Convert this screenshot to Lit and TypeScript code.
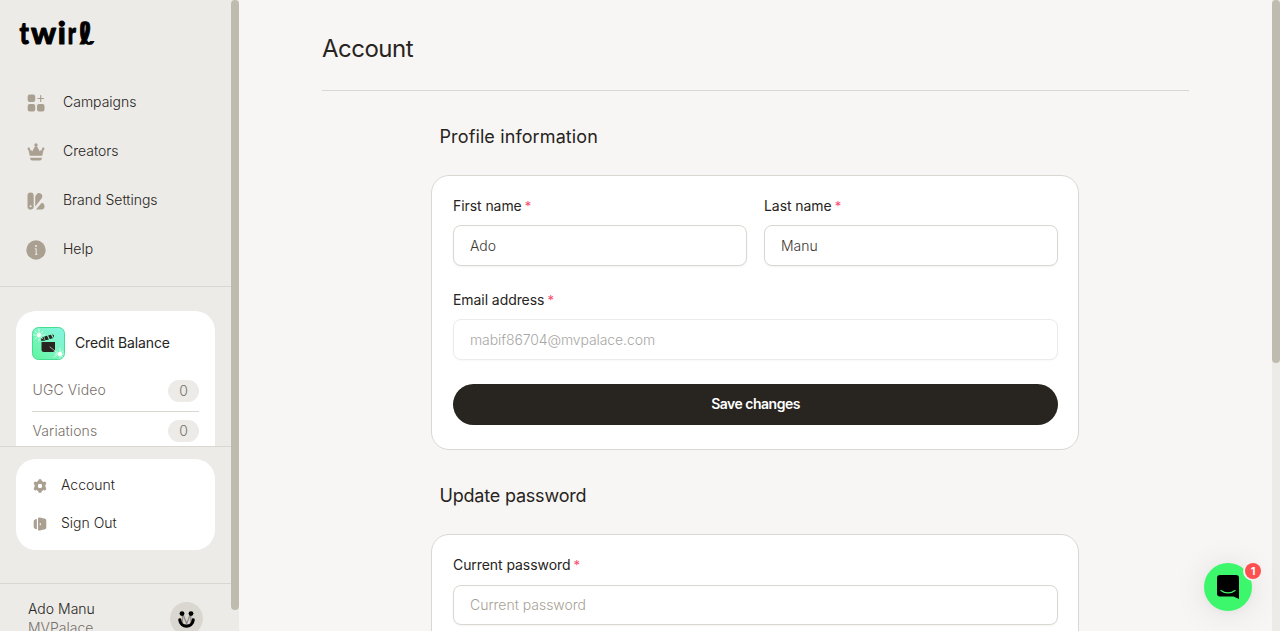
import { LitElement, html, css, svg } from "lit";
import { customElement, property } from "lit/decorators.js";

const icons: Record<string, unknown> = {
  campaigns: svg`<rect x="1.700" y="1.500" width="7.500" height="7.500" rx="2"/><rect x="1.700" y="10.900" width="7.500" height="7.500" rx="2"/><rect x="11" y="10.900" width="7.500" height="7.500" rx="2"/><path d="M14.700 2.600v5.800M11.800 5.500h5.800" fill="none" stroke="currentColor" stroke-width="1.200" stroke-linecap="round"/>`,
  creators: svg`<path d="M4 13.500 2.600 7l3.900 2.500 2.700-5h1.600l2.700 5L17.400 7 16 13.500z" stroke="currentColor" stroke-linejoin="round" stroke-width=".6"/><circle cx="10" cy="2.900" r="1.700"/><circle cx="2.800" cy="6.700" r="1.200"/><circle cx="17.200" cy="6.700" r="1.200"/><path d="M4 15.800h12c0 1.600-1 2.700-2.200 2.700H6.200c-1.200 0-2.200-1.100-2.200-2.700z"/>`,
  brand: svg`<path fill-rule="evenodd" d="M1.500 4.500a3 3 0 0 1 6.200 0V15.500a3.100 3.100 0 0 1-6.200 0zM4.600 14.300a1 1 0 1 0 0 2 1 1 0 0 0 0-2z"/><path d="M9.200 5.600l1-1.700c1.500-2.500 3.400-1.900 4.400-1.300 1.700 1 2.300 2.700 1.300 4.400l-6.700 8.500z"/><path d="M10 18.500l5.300-6.300c2-1.100 3.200 1.400 3.200 3 0 2-1.200 3.300-3 3.300z"/>`,
  help: svg`<circle cx="10" cy="10" r="9.700"/><circle cx="10" cy="6.100" r="1" fill="#ecebe7"/><path d="M8.900 8.800H10.200v5.400M9 14.400h2.300" stroke="#ecebe7" stroke-width="1" fill="none"/>`,
  gear: svg`<circle cx="10" cy="10" r="5.500" fill="none" stroke="currentColor" stroke-width="4.600"/><path d="M10 2.600v1.600M10 15.800v1.600M3.600 6.300l1.400.8M15 12.900l1.400.8M3.600 13.700l1.400-.8M15 7.100l1.400-.8" stroke="currentColor" stroke-width="5" stroke-linecap="round"/>`,
  door: svg`<path d="M5.500 3v14.400C2.700 17.400 1 16.200 1 13.500V7C1 4.200 2.700 3 5.500 3z"/><path fill-rule="evenodd" d="M7.200 2.200C7.200 1 8.200.4 9.500.6l6.500 1.500c2.200.5 3 1.600 3 3.400v9.200c0 1.800-.8 2.900-3 3.300l-6.500 1.400c-1.300.3-2.300-.2-2.300-1.400zM9.700 8.400v3.400h1.300V8.400z"/>`,
};

@customElement("ui-icon")
class UiIcon extends LitElement {
  @property() name = "";
  static styles = css`
    :host { display: block; width: 20px; height: 20px; color: #aaa091; flex: none; }
    svg { display: block; width: 100%; height: 100%; fill: currentColor; }
  `;
  render() {
    return html`<svg viewBox="0 0 20 20">${icons[this.name]}</svg>`;
  }
}

@customElement("text-field")
class TextField extends LitElement {
  @property() label = "";
  @property() value = "";
  @property() placeholder = "";
  @property({ type: Boolean, reflect: true }) disabled = false;
  static styles = css`
    :host { display: block; min-width: 0; }
    .label { display: block; height: 20.2px; line-height: 20px; font-size: 14px; letter-spacing: -0.07px; color: #272421; margin-bottom: 9px; white-space: nowrap; }
    .star { color: #fb4a6b; font-size: 13px; margin-left: -0.8px; }
    .input { display: block; box-sizing: border-box; width: 100%; height: 40.6px; border: 1px solid #d9d7d0; border-radius: 8px; background: #fff; padding: 0 16px; font: 300 14px Inter, sans-serif; letter-spacing: -0.02px; color: #3c3833; box-shadow: 0 1px 2px rgba(0, 0, 0, 0.05); outline: none; }
    .input::placeholder { color: #a8a295; opacity: 1; }
    :host([disabled]) .input { letter-spacing: -0.1px; border-color: #ecebea; color: #a9a7a5; -webkit-text-fill-color: #a9a7a5; box-shadow: 0 1px 2px rgba(0, 0, 0, 0.03); }
  `;
  render() {
    return html`<label class="label">${this.label} <span class="star">*</span></label>
      <input class="input" .value=${this.value} placeholder=${this.placeholder} ?disabled=${this.disabled} />`;
  }
}

@customElement("app-root")
class AppRoot extends LitElement {
  static styles = css`
    :host { display: block; height: 631px; font-family: Inter, "Liberation Sans", sans-serif; font-size: 14px; color: #272421; }
    .shell { position: relative; display: flex; height: 631px; overflow: hidden; background: #f7f6f4; }
    .side { width: 239px; flex: none; display: flex; background: #ecebe7; }
    .col { width: 231px; flex: none; display: flex; flex-direction: column; font-weight: 300; }
    .col > * { flex: none; }
    .thumb { width: 8px; height: 610px; border-radius: 4px; background: #c0bbaf; }
    .brand { height: 78px; box-sizing: border-box; padding: 17px 0 0 19px; }
    .logo { display: block; width: 80px; height: 34px; fill: #000; overflow: visible; }
    .nav { height: 208px; border-bottom: 1px solid #d9d7d0; }
    .link { display: flex; align-items: center; height: 49px; padding-left: 26px; gap: 17px; }
    .link ui-icon { margin-top: 1px; }
    .link span, .mini span { margin-top: -1px; }
    .link span { padding-bottom: 1px; }
    .credits { height: 135px; padding: 24px 16px 0; overflow: hidden; border-bottom: 1px solid #d9d7d0; }
    .box { background: #fff; border-radius: 20px; }
    .credit { height: 200px; padding: 16px; box-sizing: border-box; }
    .credit-head { display: flex; align-items: center; gap: 10px; height: 33px; margin-bottom: 10px; font-weight: 400; letter-spacing: -0.13px; }
    .credit-head span { padding-bottom: 2px; }
    .badge { display: block; width: 33px; height: 33px; }
    .row { display: flex; align-items: center; justify-content: space-between; height: 42px; box-sizing: border-box; color: #78716a; border-bottom: 1px solid #d9d7d0; letter-spacing: 0.1px; padding-left: 0.5px; }
    .row > span:first-child { padding-bottom: 2px; }
    .row + .row { height: 38px; border: 0; }
    .pill { width: 31px; height: 22px; line-height: 21px; border-radius: 11px; background: #ecebe7; text-align: center; }
    .account { margin: 12px 16px 0; height: 91px; box-sizing: border-box; padding: 7px 17px; }
    .mini { display: flex; align-items: center; height: 38px; gap: 14px; }
    .mini span { padding-bottom: 1px; }
    .mini ui-icon { width: 14px; height: 14px; margin-top: 1px; }
    .user { display: flex; justify-content: space-between; margin-top: 33px; border-top: 1px solid #d9d7d0; padding: 15px 28px 0; height: 60px; }
    .names { line-height: 19px; }
    .muted { color: #78716a; }
    .avatar { display: block; width: 33px; height: 33px; margin-top: 3px; }
    .main { flex: 1; min-width: 0; padding: 0 83px; }
    .title { margin: 0; height: 91px; box-sizing: border-box; padding-top: 33px; line-height: 32px; font-size: 24px; font-weight: 400; letter-spacing: -0.5px; border-bottom: 1px solid #d9d7d0; }
    .section { width: 648px; margin: 0 auto 0 109px; }
    .section.first { padding-top: 32px; }
    .section.second { padding-top: 32.5px; }
    .heading { margin: 0; padding-left: 8.5px; height: 52.2px; line-height: 28px; font-size: 18px; font-weight: 400; letter-spacing: -0.2px; }
    .first .heading { letter-spacing: 0.12px; }
    .card { box-sizing: border-box; background: #fff; border: 1px solid #d9d7d0; border-radius: 18px; padding: 20px 20px 24px 21px; display: grid; gap: 24px; }
    .pair { display: grid; grid-template-columns: 1fr 1fr; gap: 17px; }
    .save { height: 41px; border: 0; border-radius: 21px; background: #282420; color: #fff; font: 600 14px Inter, sans-serif; letter-spacing: -0.5px; padding: 0 0 2px; }
    .track { width: 8px; flex: none; background: #ecebe7; }
    .track .thumb { height: 363px; }
    .halo { position: absolute; left: 1204px; top: 563px; width: 48px; height: 48px; border-radius: 50%; box-shadow: 0 1px 6px rgba(0, 0, 0, 0.03), 0 2px 32px rgba(0, 0, 0, 0.1); background: #3cf76c; }
    .bubble { display: block; width: 48px; height: 48px; }
    .count { position: absolute; left: 41px; top: 0; width: 16px; height: 16px; line-height: 16px; border-radius: 50%; background: #ff5050; color: #fff; font-size: 11px; font-weight: 700; text-align: center; box-shadow: 0 0 0 2px #f3f2f0; }
  `;

  render() {
    const links = [
      ["campaigns", "Campaigns"],
      ["creators", "Creators"],
      ["brand", "Brand Settings"],
      ["help", "Help"],
    ];
    return html`<div class="shell">
      <aside class="side">
        <div class="col">
          <div class="brand">
            <svg class="logo" viewBox="0 0 80 34" aria-label="twirl">
              <g font-family="Lato" font-weight="900" font-size="31" stroke="#000" stroke-width="1" stroke-linejoin="round">
                <text transform="translate(.4 27.300) scale(.8 1)">t</text>
                <text x="12" y="27.300">w</text>
                <text x="38.800" y="27.300">i</text>
                <text transform="translate(48.800 27.300) scale(.7 1)">r</text>
              </g>
              <text transform="translate(61.500 27.300) skewX(16) scale(1.200 1)" font-family="DejaVu Sans" font-weight="700" font-size="30" stroke="#000" stroke-width=".8">ℓ</text>
            </svg>
          </div>
          <nav class="nav">
            ${links.map(([i, t]) => html`<div class="link"><ui-icon name=${i}></ui-icon><span>${t}</span></div>`)}
          </nav>
          <div class="credits">
            <div class="box credit">
              <div class="credit-head">
                <svg class="badge" viewBox="0 0 33 33">
                  <defs><linearGradient id="g" x1="0" y1="1" x2="1" y2="0"><stop stop-color="#5ff5a0"/><stop offset=".5" stop-color="#7cf5c0"/><stop offset="1" stop-color="#86f5e6"/></linearGradient></defs>
                  <rect x=".5" y=".5" width="32" height="32" rx="6" fill="url(#g)" stroke="#45dd92"/>
                  <path fill="#282420" d="M9.500 15h13.500v7.500q0 2.500-2.500 2.500h-8.500q-2.500 0-2.500-2.500zM9 13.700q0-3 2.600-3.700l1.400 3.700zM13.400 13.300l-1.200-3.700 2.800-.8 1.900 3.600zM17.800 12l-1.700-3.500 2.800-.8 2 3.500zM22 10.800l-2-3.400q1.700-.2 2 1.400z"/>
                  <g stroke="#fff" stroke-linecap="round" stroke-width=".8" opacity=".75"><path d="M7 2v12M1 8h12M3 4l8 8M11 4l-8 8M28 21v10M18 20l14 11M22 30l9-6M23 27h9"/></g>
                  <circle cx="7" cy="8" r="1.900" fill="#fff"/><circle cx="28" cy="27" r="2.200" fill="#fff"/>
                </svg>
                <span>Credit Balance</span>
              </div>
              <div class="row"><span>UGC Video</span><span class="pill">0</span></div>
              <div class="row"><span>Variations</span><span class="pill">0</span></div>
            </div>
          </div>
          <div class="box account">
            <div class="mini"><ui-icon name="gear"></ui-icon><span>Account</span></div>
            <div class="mini"><ui-icon name="door"></ui-icon><span>Sign Out</span></div>
          </div>
          <div class="user">
            <div class="names"><div>Ado Manu</div><div class="muted">MVPalace</div></div>
            <svg class="avatar" viewBox="0 0 33 33">
              <circle cx="16.500" cy="16.500" r="16.500" fill="#d9d7d0"/>
              <text x="16.500" y="21.500" text-anchor="middle" font-family="Inter" font-size="13" font-weight="300" fill="#78716a">M</text>
              <circle cx="12" cy="11.600" r="2.400"/><circle cx="21" cy="11.600" r="2.400"/>
              <path d="M9.800 17.800c.8 8.400 12.600 8.400 13.400 0" fill="none" stroke="#000" stroke-width="3.200" stroke-linecap="round"/>
            </svg>
          </div>
        </div>
        <div class="thumb"></div>
      </aside>
      <main class="main">
        <h1 class="title">Account</h1>
        <section class="section first">
          <h2 class="heading">Profile information</h2>
          <div class="card">
            <div class="pair">
              <text-field label="First name" value="Ado"></text-field>
              <text-field label="Last name" value="Manu"></text-field>
            </div>
            <text-field label="Email address" value="mabif86704@mvpalace.com" disabled></text-field>
            <button class="save">Save changes</button>
          </div>
        </section>
        <section class="section second">
          <h2 class="heading">Update password</h2>
          <div class="card">
            <text-field label="Current password" placeholder="Current password"></text-field>
          </div>
        </section>
      </main>
      <div class="track"><div class="thumb"></div></div>
      <div class="halo">
        <svg class="bubble" viewBox="0 0 48 48">
          <path d="M16 12h16q3 0 3 3v21l-5.500-2.500H16q-3 0-3-3V15q0-3 3-3z"/>
          <path d="M17 27.500c4 3.200 10 3.200 14 0" fill="none" stroke="#3cf76c" stroke-width="1.200" stroke-linecap="round"/>
        </svg>
        <span class="count">1</span>
      </div>
    </div>`;
  }
}
